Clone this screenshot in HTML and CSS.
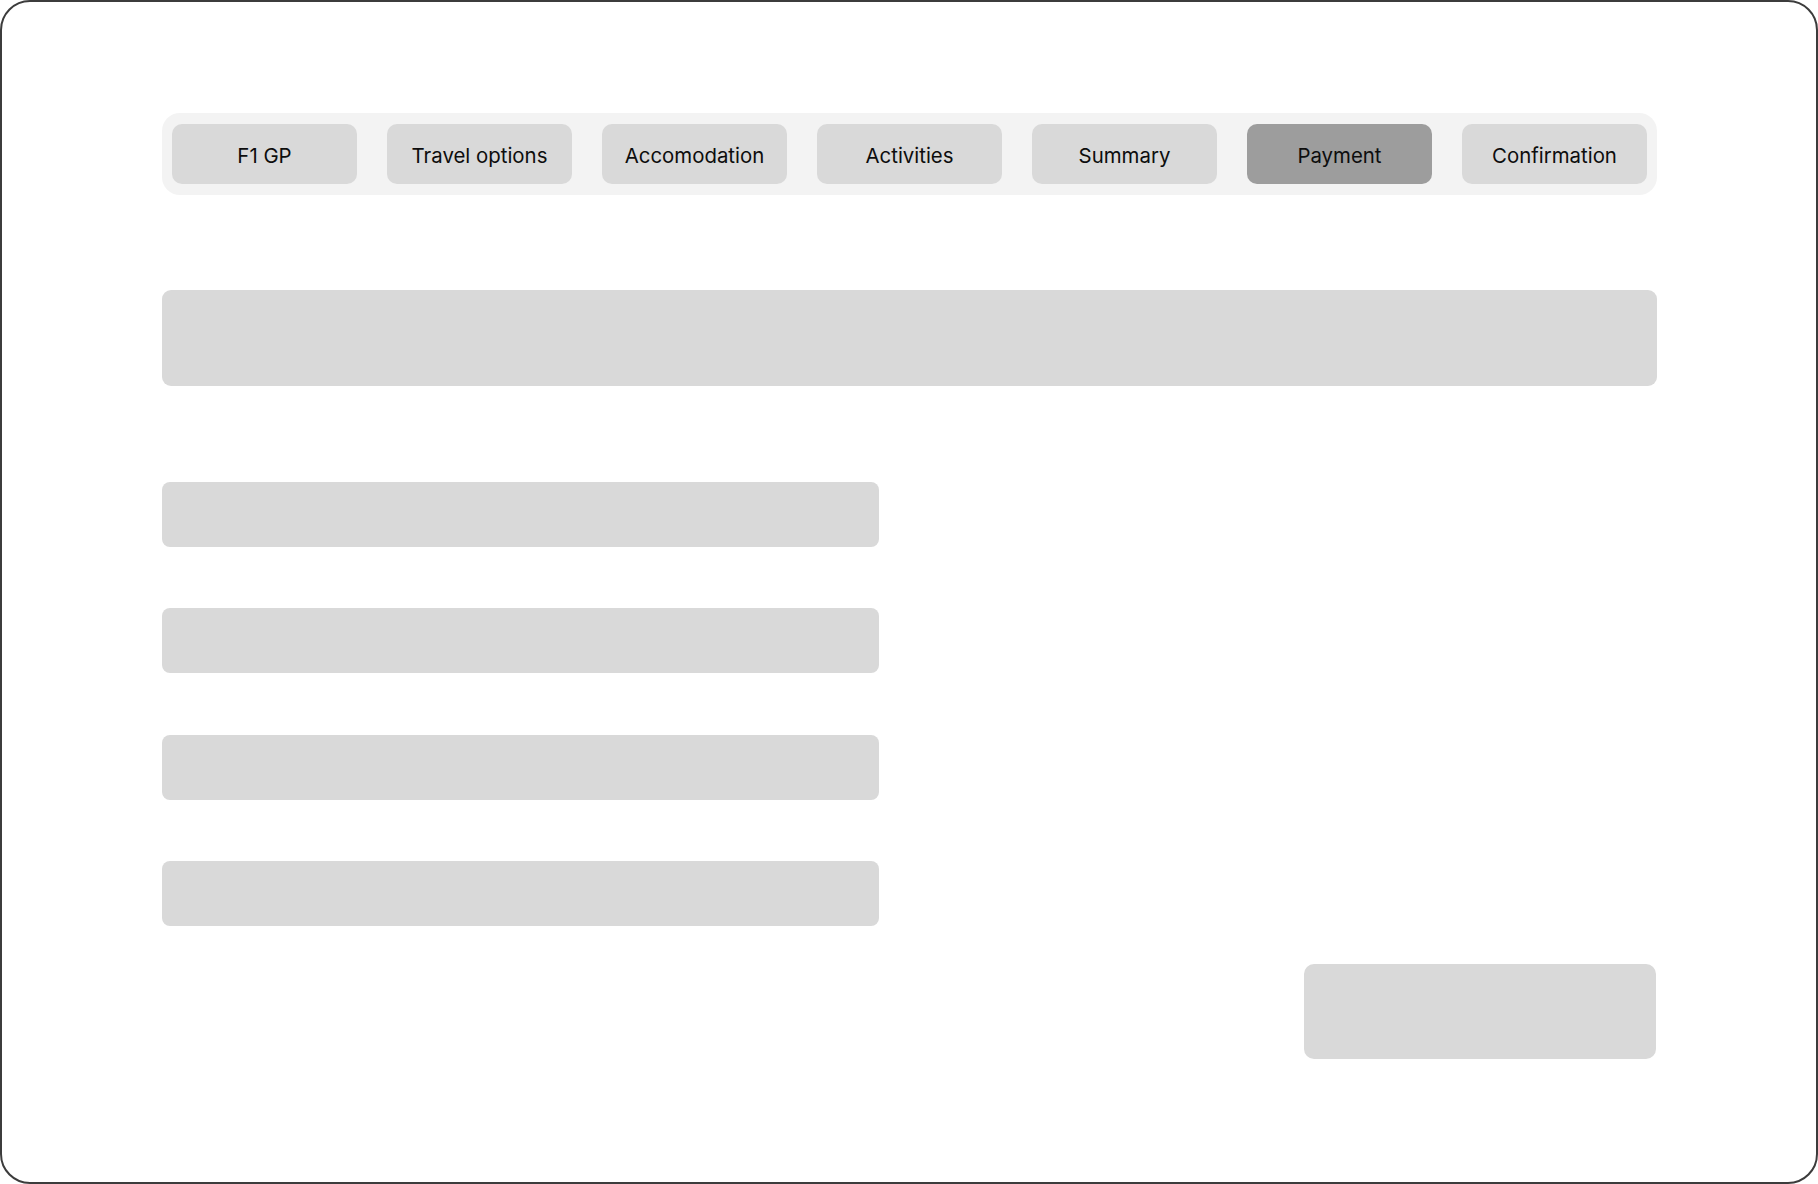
FILE: index.html
```html
<!DOCTYPE html>
<html lang="en">
<head>
<meta charset="utf-8">
<title>F1 GP booking – Payment</title>
<link rel="stylesheet" href="styles.css">
</head>
<body>
<div class="frame">
  <div class="page">
    <nav class="steps">
      <div class="step">F1 GP</div>
      <div class="step">Travel options</div>
      <div class="step">Accomodation</div>
      <div class="step">Activities</div>
      <div class="step">Summary</div>
      <div class="step step-active">Payment</div>
      <div class="step">Confirmation</div>
    </nav>

    <div class="banner"></div>

    <div class="fields">
      <div class="field"></div>
      <div class="field"></div>
      <div class="field"></div>
      <div class="field"></div>
    </div>

    <div class="actions">
      <div class="pay-button"></div>
    </div>
  </div>
</div>
</body>
</html>
```

FILE: styles.css
```css
* {
  box-sizing: border-box;
}

html, body {
  margin: 0;
  padding: 0;
  background: #ffffff;
}

body {
  font-family: Inter, "Noto Sans", sans-serif;
  color: #0d0d0d;
}

.frame {
  width: 1818px;
  height: 1184px;
  border: 2px solid #3c3c3c;
  border-radius: 30px;
  background: #ffffff;
  padding: 111px 0 0 160px;
}

.page {
  width: 1495px;
}

.steps {
  display: flex;
  gap: 30px;
  padding: 11px 10px;
  background: #f3f3f3;
  border-radius: 18px;
}

.step {
  width: 185px;
  height: 60px;
  padding-top: 2px;
  border-radius: 10px;
  background: #d9d9d9;
  display: flex;
  align-items: center;
  justify-content: center;
  font-size: 20.4px;
  font-weight: 400;
}

.step-active {
  background: #9d9d9d;
}

.banner {
  margin-top: 95px;
  height: 96px;
  border-radius: 9px;
  background: #d9d9d9;
}

.fields {
  margin-top: 96px;
  display: flex;
  flex-direction: column;
  gap: 61.4px;
  width: 717px;
}

.field {
  height: 65px;
  border-radius: 8px;
  background: #d9d9d9;
}

.actions {
  margin-top: 37.8px;
  display: flex;
  justify-content: flex-end;
  padding-right: 1px;
}

.pay-button {
  width: 352px;
  height: 95px;
  border-radius: 10px;
  background: #d9d9d9;
}
```
